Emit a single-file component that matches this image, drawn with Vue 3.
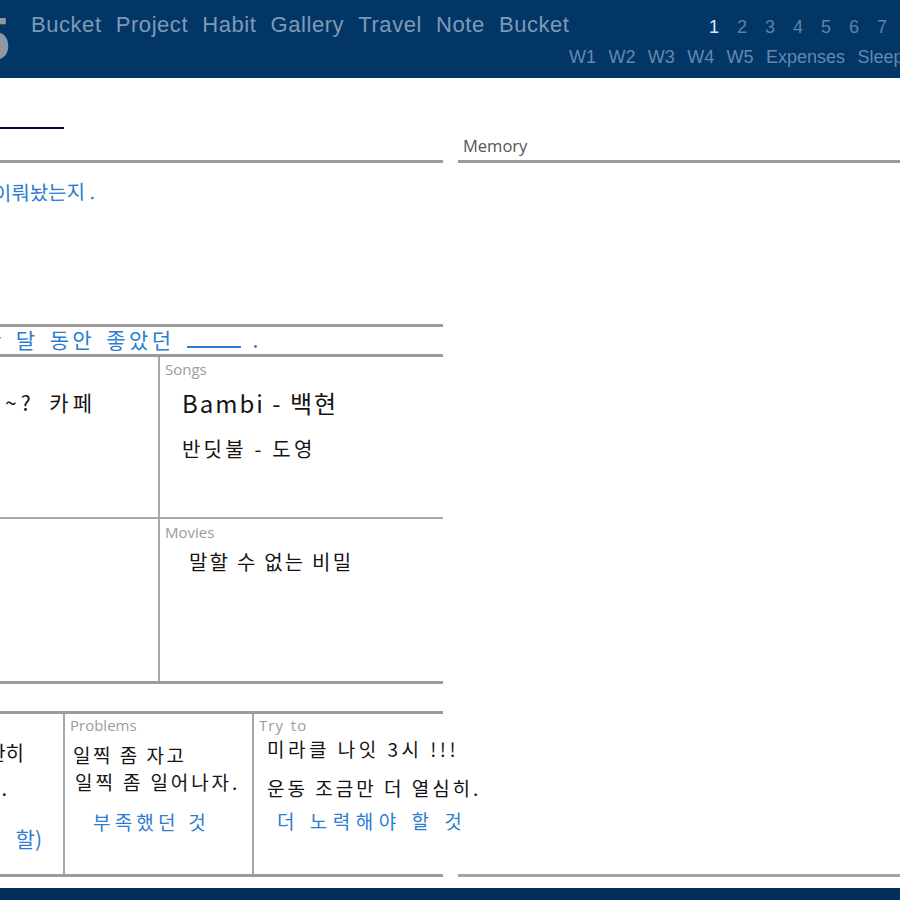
<script setup>
const mainNav = ['Bucket', 'Project', 'Habit', 'Gallery', 'Travel', 'Note', 'Bucket']
const days = [1, 2, 3, 4, 5, 6, 7, 8]
const subNav = ['W1', 'W2', 'W3', 'W4', 'W5', 'Expenses', 'Sleep']
</script>

<template>
  <div class="page">
    <header class="header">
      <div class="brand"><span>2025</span></div>
      <div class="navs">
        <div class="row-one">
          <nav class="main-nav">
            <a v-for="(item, i) in mainNav" :key="i">{{ item }}</a>
          </nav>
          <div class="days">
            <a v-for="d in days" :key="d" :class="{ active: d === 1 }">{{ d }}</a>
          </div>
        </div>
        <nav class="sub-nav">
          <a v-for="item in subNav" :key="item">{{ item }}</a>
        </nav>
      </div>
    </header>

    <main class="content">
      <section class="left">
        <div class="title-area"><div class="title-line"></div></div>

        <div class="box intro">
          <p class="blue hand intro-text">무엇을 이뤄놨는지 .</p>
        </div>

        <div class="box strip">
          <p class="blue hand strip-text">한 달 동안 좋았던 <span class="blank"></span> .</p>
        </div>

        <div class="box picks">
          <div class="pick">
            <p class="hand place">어디였지~? 카페</p>
          </div>
          <div class="pick side">
            <h4>Songs</h4>
            <p class="hand song first">Bambi - 백현</p>
            <p class="hand song">반딧불 - 도영</p>
          </div>
          <div class="pick lower"></div>
          <div class="pick side lower">
            <h4>Movies</h4>
            <p class="hand movie">말할 수 없는 비밀</p>
          </div>
        </div>

        <div class="box review">
          <div class="note first-note">
            <p class="hand kept one">완히</p>
            <p class="hand kept two">.</p>
            <p class="blue hand kept three">할)</p>
          </div>
          <div class="note divided">
            <h4>Problems</h4>
            <p class="hand prob one">일찍 좀 자고</p>
            <p class="hand prob two">일찍 좀 일어나자.</p>
            <p class="blue hand prob three">부족했던 것</p>
          </div>
          <div class="note divided">
            <h4 class="try-label">Try to</h4>
            <p class="hand try one">미라클 나잇 3시 !!!</p>
            <p class="hand try two">운동 조금만 더 열심히.</p>
            <p class="blue hand try three">더 노력해야 할 것</p>
          </div>
        </div>
      </section>

      <section class="right">
        <h3>Memory</h3>
        <div class="memory"></div>
      </section>
    </main>

    <footer class="footer"></footer>
  </div>
</template>

<style>
html, body { margin: 0; background: #fff; }
</style>

<style scoped>
.page {
  width: 900px;
  height: 900px;
  overflow: hidden;
  display: flex;
  flex-direction: column;
  background: #fff;
  font-family: "Liberation Sans", Arial, sans-serif;
}
.header {
  flex: 0 0 78px;
  display: flex;
  background: #023667;
  overflow: hidden;
}
.brand {
  flex: 0 0 10px;
  min-width: 0;
  display: flex;
  justify-content: flex-end;
  white-space: nowrap;
  font-size: 62px;
  font-weight: 700;
  line-height: 62px;
  padding-top: 8px;
  color: #8f98a3;
}
.navs { margin-left: 21px; flex: 1; min-width: 0; }
.row-one { display: flex; height: 45px; padding-top: 12px; box-sizing: border-box; }
.main-nav { flex: 0 0 678px; min-width: 0; display: flex; gap: 14.2px; font-size: 22px; letter-spacing: 0.55px; color: #7f9ab6; line-height: 26px; }
.days { display: flex; gap: 18px; font-size: 18px; color: #5d83a8; line-height: 30px; white-space: nowrap; }
.days a { width: 10px; text-align: center; }
.days .active { color: #dbeaf5; }
.sub-nav {
  display: flex;
  gap: 12.4px;
  margin-left: 538px;
  font-size: 18px;
  line-height: 24px;
  color: #6489ad;
  white-space: nowrap;
}
.content {
  flex: 0 0 799px;
  display: flex;
  gap: 15px;
  margin-left: -125px;
}
.left { flex: 0 0 568px; min-width: 0; }
.right { flex: 0 0 480px; min-width: 0; display: flex; flex-direction: column; }
.right h3 {
  margin: 56px 0 0;
  height: 26px;
  padding-left: 5px;
  font: 400 16.5px/24px "Open Sans", sans-serif;
  color: #555;
}
.memory {
  height: 717px;
  border-top: 3px solid #9b9b9b;
  border-bottom: 3px solid #a4a4a4;
  box-sizing: border-box;
}
.title-area { height: 82px; }
.title-line { width: 189px; height: 2px; background: #0c0a3d; position: relative; top: 49px; }
.box { border-top: 3px solid #9b9b9b; box-sizing: border-box; }
.intro { height: 164px; }
.strip { height: 30px; }
.picks {
  height: 330px;
  display: grid;
  grid-template-columns: 283px 285px;
  grid-template-rows: 160px 164px;
  align-content: start;
  border-bottom: 3px solid #9b9b9b;
  margin-bottom: 27px;
}
.pick { position: relative; box-sizing: border-box; }
.side { border-left: 2px solid #a8a8a8; padding: 2px 0 0 5px; }
.side.lower { padding-top: 3px; }
.lower { border-top: 2px solid #a8a8a8; }
h4 {
  margin: 0;
  font: 400 15px/20px "Open Sans", sans-serif;
  color: #9c9c9c;
}
.try-label { letter-spacing: 1px; word-spacing: 2px; }
.review {
  height: 166px;
  display: grid;
  grid-template-columns: 188px 189px 191px;
  border-bottom: 3px solid #9b9b9b;
}
.note { padding: 1px 0 0 5px; box-sizing: border-box; }
.divided { border-left: 2px solid #a8a8a8; }
.hand {
  margin: 0;
  font-family: "Noto Sans CJK KR", "Noto Sans", sans-serif;
  font-weight: 400;
  color: #141414;
  white-space: nowrap;
}
.hand.blue, .blue { color: #2c7dd1; }
.intro-text { font-size: 20px; line-height: 24px; margin-top: 15px; text-align: right; padding-right: 348px; transform: rotate(-1deg); }
.strip-text { font-size: 21px; line-height: 24px; padding-left: 107px; letter-spacing: 3.4px; word-spacing: 3px; }
.blank { display: inline-block; width: 54px; border-bottom: 2px solid #2c7dd1; margin: 0 0 0 2px; }
.place { font-size: 21px; line-height: 24px; margin-top: 33px; text-align: right; padding-right: 62px; letter-spacing: 4px; word-spacing: 6px; }
.song { font-size: 24px; line-height: 28px; padding-left: 17px; }
.song.first { margin-top: 10px; letter-spacing: 2px; }
.song + .song { margin-top: 18px; font-size: 20px; letter-spacing: 3.2px; }
.movie { font-size: 20px; line-height: 28px; padding-left: 24px; margin-top: 6px; letter-spacing: 2.2px; }
.kept { text-align: right; padding-right: 39px; font-size: 20px; line-height: 24px; }
.kept.one { margin-top: 26px; }
.kept.two { margin-top: 11px; padding-right: 56px; }
.kept.three { margin-top: 26px; padding-right: 21px; font-size: 21px; }
.prob { font-size: 19px; line-height: 24px; padding-left: 3px; letter-spacing: 2.5px; }
.prob.one { margin-top: 8px; }
.prob.two { margin-top: 3px; padding-left: 5px; letter-spacing: 2.9px; }
.prob.three { margin-top: 16px; padding-left: 23px; font-size: 19px; letter-spacing: 4.2px; }
.try { font-size: 19px; line-height: 24px; padding-left: 8px; letter-spacing: 3.5px; }
.try.one { margin-top: 2px; }
.try.two { margin-top: 15px; letter-spacing: 3px; }
.try.three { margin-top: 9px; padding-left: 18px; font-size: 19px; letter-spacing: 5.5px; }
.footer { flex: 0 0 12px; margin-top: 11px; background: #042f5c; }
</style>
